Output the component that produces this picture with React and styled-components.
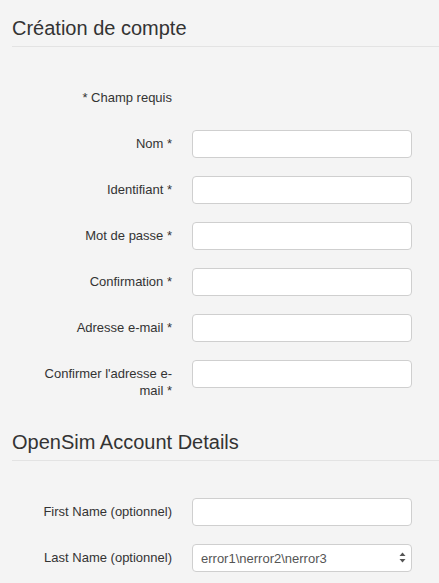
import React from 'react';
import styled, { createGlobalStyle } from 'styled-components';

const GlobalStyle = createGlobalStyle`
  html, body {
    margin: 0;
    padding: 0;
    background: #f4f4f4;
    font-family: "Liberation Sans", Arial, Helvetica, sans-serif;
    color: #333;
  }
`;

const Page = styled.div`
  padding: 13px 0 0 12px;
  min-height: 583px;
  box-sizing: border-box;
`;

const Section = styled.section`
  margin-bottom: ${(p) => p.$last ? 0 : '28px'};
`;

const Legend = styled.h2`
  margin: 0 0 37px;
  padding: 0 0 3px;
  font-size: 20px;
  font-weight: normal;
  line-height: 30px;
  color: #333;
  border-bottom: 1px solid #e3e3e3;
`;

const Form = styled.div`
  display: grid;
  grid-template-columns: 160px 220px;
  column-gap: 20px;
  row-gap: 18px;
  align-items: start;
`;

const Label = styled.label`
  display: block;
  box-sizing: border-box;
  text-align: right;
  font-size: 13px;
  line-height: 17px;
  padding: 5px 0 0 18px;
  color: #333;
  min-height: 28px;
`;

const Input = styled.input`
  box-sizing: border-box;
  width: 220px;
  height: 28px;
  margin: 0;
  padding: 4px 8px;
  border: 1px solid #cfcfcf;
  border-radius: 4px;
  background: #fff;
  font: 13px "Liberation Sans", Arial, sans-serif;
  color: #555;
  outline: none;
`;

const SelectWrap = styled.div`
  position: relative;
  width: 220px;
  height: 28px;
`;

const Select = styled.select`
  appearance: none;
  -webkit-appearance: none;
  box-sizing: border-box;
  width: 100%;
  height: 28px;
  margin: 0;
  padding: 0 24px 0 8px;
  border: 1px solid #cfcfcf;
  border-radius: 4px;
  background: #fff;
  font: 13px "Liberation Sans", Arial, sans-serif;
  color: #555;
  outline: none;
`;

const Arrows = styled.svg`
  position: absolute;
  right: 6px;
  top: 8px;
  pointer-events: none;
`;

const accountFields = [
  { label: 'Nom *' },
  { label: 'Identifiant *' },
  { label: 'Mot de passe *', type: 'password' },
  { label: 'Confirmation *', type: 'password' },
  { label: 'Adresse e-mail *', type: 'email' },
  { label: "Confirmer l'adresse e-mail *", type: 'email' },
];

const App = () => {
  return (
    <>
      <GlobalStyle />
      <Page>
        <Section>
          <Legend>Création de compte</Legend>
          <Form>
            <Label as="div">* Champ requis</Label>
            <div />
            {accountFields.map((f, idx) => (
              <React.Fragment key={idx}>
                <Label>{f.label}</Label>
                <Input type={f.type || 'text'} />
              </React.Fragment>
            ))}
          </Form>
        </Section>
        <Section $last>
          <Legend>OpenSim Account Details</Legend>
          <Form>
            <Label>First Name (optionnel)</Label>
            <Input type="text" />
            <Label>Last Name (optionnel)</Label>
            <SelectWrap>
              <Select defaultValue="e">
                <option value="e">error1\nerror2\nerror3</option>
              </Select>
              <Arrows width="7" height="11" viewBox="0 0 7 11">
                <path d="M3.5 0.5 L6.5 4 L0.5 4 Z" fill="#555" />
                <path d="M3.5 10.5 L6.5 7 L0.5 7 Z" fill="#555" />
              </Arrows>
            </SelectWrap>
          </Form>
        </Section>
      </Page>
    </>
  );
};

export default App;
